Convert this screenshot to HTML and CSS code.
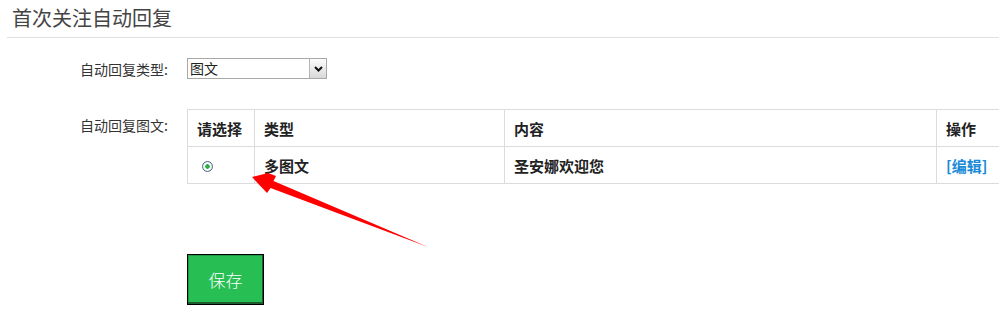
FILE: index.html
```html
<!DOCTYPE html>
<html lang="zh-CN">
  <head>
    <meta charset="UTF-8" />
    <title>首次关注自动回复</title>
    <link rel="stylesheet" href="styles.css">
  </head>
  <body>
    <div class="page">
      <h2 class="page-title">首次关注自动回复</h2>

      <form class="reply-form">
        <div class="form-row row-type">
          <label class="form-label" for="replyType">自动回复类型:</label>
          <div class="select-box">
            <span class="select-text">图文</span>
            <span class="select-btn">
              <svg width="9" height="6" viewBox="0 0 9 6"><path d="M1 1 L4.5 4.5 L8 1" fill="none" stroke="#111" stroke-width="2"/></svg>
            </span>
          </div>
        </div>

        <div class="form-row row-news">
          <label class="form-label">自动回复图文:</label>
          <table class="news-table">
            <tr>
              <th class="col-pick">请选择</th>
              <th class="col-type">类型</th>
              <th class="col-content">内容</th>
              <th class="col-op">操作</th>
            </tr>
            <tr>
              <td class="col-pick"><span class="radio"></span></td>
              <td>多图文</td>
              <td>圣安娜欢迎您</td>
              <td><a class="edit-link" href="#">[编辑]</a></td>
            </tr>
          </table>
        </div>

        <div class="form-row row-save">
          <span class="form-label"></span>
          <button type="button" class="save-btn">保存</button>
        </div>
      </form>

      <!-- red arrow pointing at the radio -->
      <svg class="arrow" width="999" height="319" viewBox="0 0 999 319">
        <polygon points="252,177 268,173 276,176 273.5,181 428,247 270.5,188 267,193" fill="#ff0000"/>
      </svg>
    </div>
  </body>
</html>
```

FILE: styles.css
```css
body {
  margin: 0;
  padding: 0;
  background-color: #fff;
  font-family: "Microsoft YaHei", "Noto Sans CJK SC", sans-serif;
  color: #333;
  overflow: hidden;
}

.page {
  position: relative;
  width: 999px;
  height: 319px;
  overflow: hidden;
}

.page-title {
  margin: 0 0 0 7px;
  padding: 5px 0 0 5px;
  height: 32px;
  font-size: 20px;
  font-weight: normal;
  line-height: 26px;
  color: #444;
  border-bottom: 1px solid #e0e0e0;
}

.reply-form {
  display: flex;
  flex-direction: column;
}

.form-row {
  display: flex;
  align-items: flex-start;
  gap: 19px;
}

.form-label {
  width: 168px;
  flex: none;
  text-align: right;
  font-size: 14px;
  color: #333;
}

.row-type {
  margin-top: 20px;
}

.row-type .form-label {
  line-height: 22px;
}

.select-box {
  width: 138px;
  height: 19px;
  border: 1px solid #a8a8a8;
  display: flex;
  align-items: stretch;
  background: #fff;
}

.select-text {
  flex: 1;
  font-size: 14px;
  line-height: 19px;
  padding-left: 2px;
  color: #222;
}

.select-btn {
  width: 16px;
  border-left: 1px solid #b5b5b5;
  background: linear-gradient(#fdfdfd, #d8d8d8);
  display: flex;
  align-items: center;
  justify-content: center;
}

.row-news {
  margin-top: 29px;
}

.row-news .form-label {
  padding-top: 7px;
  line-height: 18px;
}

.news-table {
  border-collapse: collapse;
  width: 830px;
  flex: none;
  font-size: 15px;
  color: #222;
}

.news-table th,
.news-table td {
  border: 1px solid #dcdcdc;
  text-align: left;
  padding: 0 0 0 9px;
  height: 36px;
  font-weight: bold;
}

.col-pick {
  width: 57px;
}

.col-type {
  width: 240px;
}

.col-content {
  width: 422px;
}

.radio {
  display: inline-block;
  width: 9px;
  height: 9px;
  margin: 4px 0 0 5px;
  border: 1px solid #4b6a8a;
  border-radius: 50%;
  background: radial-gradient(circle, #28b040 0 2px, #fff 2.5px);
  box-shadow: inset 0 0 1px #9ab;
}

.edit-link {
  color: #1a8ad8;
  text-decoration: none;
  font-weight: bold;
}

.row-save {
  margin-top: 70px;
}

.save-btn {
  width: 77px;
  height: 51px;
  border: 1px solid #000;
  box-shadow: inset -1px -2px 0 #1d5a2e, inset 1px 1px 0 #1f9a42;
  background-color: #27be53;
  color: #fff;
  font-family: "Microsoft YaHei", "Noto Sans CJK SC", sans-serif;
  font-size: 17px;
  font-weight: 300;
  padding: 0;
  cursor: pointer;
}

.arrow {
  position: absolute;
  left: 0;
  top: 0;
  pointer-events: none;
}
```
